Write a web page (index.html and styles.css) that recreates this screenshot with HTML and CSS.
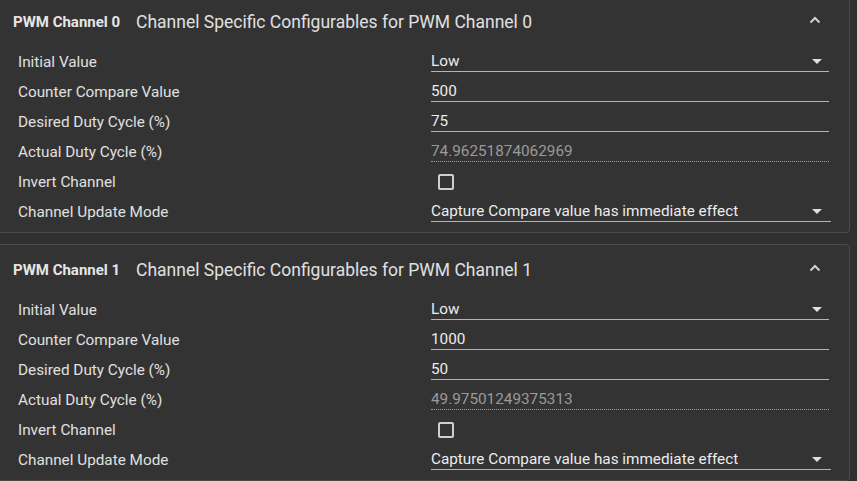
FILE: index.html
```html
<!DOCTYPE html>
<html>
<head>
<meta charset="utf-8">
<link rel="stylesheet" href="styles.css">
</head>
<body>
<div class="list">
  <section class="panel">
    <header class="panel-head">
      <span class="panel-title">PWM Channel 0</span>
      <span class="panel-sub">Channel Specific Configurables for PWM Channel 0</span>
      <svg class="collapse" width="12" height="8" viewBox="0 0 12 8"><path d="M1.5 6.5 L6 2 L10.5 6.5" fill="none" stroke="#d0d0d0" stroke-width="2"/></svg>
    </header>
    <div class="rows">
      <div class="row"><span class="label">Initial Value</span><div class="field select"><span>Low</span><i class="tri"></i></div></div>
      <div class="row"><span class="label">Counter Compare Value</span><div class="field"><span>500</span></div></div>
      <div class="row"><span class="label">Desired Duty Cycle (%)</span><div class="field"><span>75</span></div></div>
      <div class="row"><span class="label">Actual Duty Cycle (%)</span><div class="field disabled"><span>74.96251874062969</span></div></div>
      <div class="row"><span class="label">Invert Channel</span><div class="check-wrap"><span class="check"></span></div></div>
      <div class="row"><span class="label">Channel Update Mode</span><div class="field select wide"><span>Capture Compare value has immediate effect</span><i class="tri"></i></div></div>
    </div>
  </section>
  <section class="panel">
    <header class="panel-head">
      <span class="panel-title">PWM Channel 1</span>
      <span class="panel-sub">Channel Specific Configurables for PWM Channel 1</span>
      <svg class="collapse" width="12" height="8" viewBox="0 0 12 8"><path d="M1.5 6.5 L6 2 L10.5 6.5" fill="none" stroke="#d0d0d0" stroke-width="2"/></svg>
    </header>
    <div class="rows">
      <div class="row"><span class="label">Initial Value</span><div class="field select"><span>Low</span><i class="tri"></i></div></div>
      <div class="row"><span class="label">Counter Compare Value</span><div class="field"><span>1000</span></div></div>
      <div class="row"><span class="label">Desired Duty Cycle (%)</span><div class="field"><span>50</span></div></div>
      <div class="row"><span class="label">Actual Duty Cycle (%)</span><div class="field disabled"><span>49.97501249375313</span></div></div>
      <div class="row"><span class="label">Invert Channel</span><div class="check-wrap"><span class="check"></span></div></div>
      <div class="row"><span class="label">Channel Update Mode</span><div class="field select wide"><span>Capture Compare value has immediate effect</span><i class="tri"></i></div></div>
    </div>
  </section>
</div>
</body>
</html>
```

FILE: styles.css
```css
html, body {
  margin: 0;
  padding: 0;
  background: #303030;
  overflow: hidden;
  font-family: Roboto, "Liberation Sans", sans-serif;
  color: #e0e0e0;
}
.list {
  margin: -4px 7px 0 -8px;
  display: flex;
  flex-direction: column;
  gap: 11px;
}
.panel {
  background: #333333;
  border: 1px solid #4a4a4a;
  border-radius: 4px;
  padding-bottom: 6px;
}
.panel-head {
  height: 49px;
  display: flex;
  align-items: center;
  padding: 0 28px 0 20px;
}
.panel-title {
  font-size: 15px;
  font-weight: 700;
  color: #e6e6e6;
  width: 123px;
}
.panel-sub {
  font-size: 17.5px;
  color: #e0e0e0;
  flex: 1;
}
.collapse {
  margin-top: -4px;
}
.rows {
  padding: 0 20px 0 25px;
}
.row {
  height: 30px;
  display: grid;
  grid-template-columns: 413px 1fr;
  align-items: center;
  font-size: 15.3px;
}
.label {
  color: #e0e0e0;
  padding-top: 2px;
}
.field {
  height: 20px;
  line-height: 20px;
  border-bottom: 1px solid #b5b5b5;
  display: flex;
  align-items: center;
  justify-content: space-between;
  color: #ececec;
  margin-top: 1px;
}
.field.wide {
  margin-right: -2px;
}
.field.disabled {
  border-bottom: 1px dotted #9a9a9a;
  color: #9a9a9a;
}
.tri {
  width: 0;
  height: 0;
  border-left: 5px solid transparent;
  border-right: 5px solid transparent;
  border-top: 5px solid #e0e0e0;
  margin-right: 7px;
}
.field.wide .tri {
  margin-right: 9px;
}
.check-wrap {
  display: flex;
  align-items: center;
  padding-left: 7px;
  padding-top: 2px;
}
.check {
  width: 12px;
  height: 12px;
  border: 2px solid #cfcfcf;
  border-radius: 2px;
}
```
